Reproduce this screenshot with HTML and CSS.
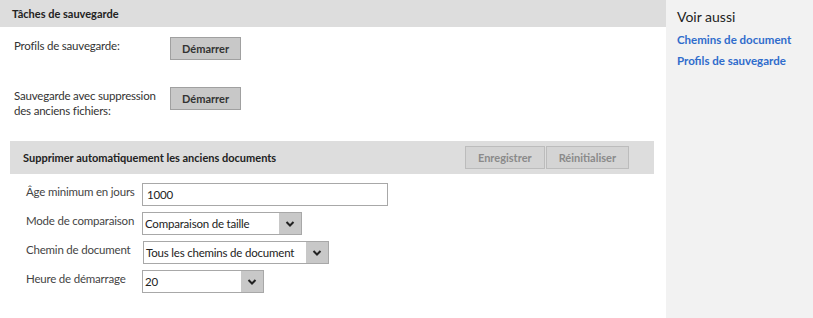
FILE: index.html
```html
<!DOCTYPE html>
<html lang="fr">
<head>
    <meta charset="UTF-8">
    <title>Tâches de sauvegarde</title>
    <link rel="stylesheet" href="styles.css">
</head>
<body>
    <main class="content">
        <div class="page-title">Tâches de sauvegarde</div>
        <div class="tasks">
            <div class="task">
                <span class="task-label">Profils de sauvegarde:</span>
                <button class="btn">Démarrer</button>
            </div>
            <div class="task">
                <span class="task-label">Sauvegarde avec suppression des anciens fichiers:</span>
                <button class="btn">Démarrer</button>
            </div>
        </div>

        <section class="panel">
            <div class="panel-head">
                <strong>Supprimer automatiquement les anciens documents</strong>
                <div class="panel-actions">
                    <button class="btn btn-disabled">Enregistrer</button>
                    <button class="btn btn-disabled">Réinitialiser</button>
                </div>
            </div>
            <div class="form">
                <div class="form-row">
                    <label>Âge minimum en jours</label>
                    <div class="field field-text">1000</div>
                </div>
                <div class="form-row">
                    <label>Mode de comparaison</label>
                    <div class="field field-select sel-mode"><span>Comparaison de taille</span><i class="arrow"><svg width="10" height="6" viewBox="0 0 10 6"><polyline points="1.5,1 5,4.5 8.5,1" fill="none" stroke="#222" stroke-width="2"/></svg></i></div>
                </div>
                <div class="form-row">
                    <label>Chemin de document</label>
                    <div class="field field-select sel-path"><span>Tous les chemins de document</span><i class="arrow"><svg width="10" height="6" viewBox="0 0 10 6"><polyline points="1.5,1 5,4.5 8.5,1" fill="none" stroke="#222" stroke-width="2"/></svg></i></div>
                </div>
                <div class="form-row">
                    <label>Heure de démarrage</label>
                    <div class="field field-select sel-hour"><span>20</span><i class="arrow"><svg width="10" height="6" viewBox="0 0 10 6"><polyline points="1.5,1 5,4.5 8.5,1" fill="none" stroke="#222" stroke-width="2"/></svg></i></div>
                </div>
            </div>
        </section>
    </main>
    <aside class="sidebar">
        <div class="side-title">Voir aussi</div>
        <a href="#">Chemins de document</a>
        <a href="#">Profils de sauvegarde</a>
    </aside>
</body>
</html>
```

FILE: styles.css
```css
body {
    margin: 0;
    display: flex;
    min-height: 318px;
    font-family: Lato, "Open Sans", sans-serif;
    font-size: 11.5px;
    color: #333;
    background: #fff;
}
.content {
    width: 666px;
}
.page-title {
    height: 27px;
    line-height: 27px;
    padding-left: 12px;
    background-color: #dddddd;
    font-size: 11px;
    font-weight: bold;
    color: #222;
}
.tasks {
    padding: 10px 14px 0;
}
.task {
    display: flex;
    align-items: flex-start;
    margin-bottom: 27px;
}
.task:last-child {
    margin-bottom: 0;
}
.task-label {
    width: 156px;
    line-height: 15px;
    padding-top: 1px;
    letter-spacing: -0.2px;
}
.btn {
    height: 23px;
    padding: 0 11px;
    font-family: inherit;
    font-size: 11px;
    font-weight: bold;
    color: #333;
    background-color: #c8c8c8;
    border: 1px solid #a0a0a0;
}
.panel {
    margin: 23px 12px 0 10px;
}
.panel-head {
    display: flex;
    align-items: center;
    justify-content: space-between;
    height: 33px;
    padding: 0 25px 0 13px;
    background-color: #dddddd;
    font-size: 11px;
    color: #222;
}
.panel-actions {
    display: flex;
    gap: 1px;
}
.btn-disabled {
    padding: 0 12px;
    background-color: #d4d4d4;
    border-color: #bcbcbc;
    color: #8a8a8a;
}
.form {
    padding: 9px 0 0 16px;
}
.form-row {
    display: flex;
    align-items: flex-start;
    margin-bottom: 6px;
}
.form-row label {
    width: 116px;
    padding-top: 2px;
    white-space: nowrap;
    letter-spacing: -0.2px;
    color: #444;
}
.field {
    box-sizing: border-box;
    height: 23px;
    border: 1px solid #a8a8a8;
    display: flex;
    align-items: center;
    font-size: 11.5px;
    letter-spacing: -0.2px;
    color: #222;
    white-space: nowrap;
}
.field-text {
    width: 246px;
    padding-left: 4px;
}
.field-select span {
    flex: 1;
    padding-left: 2px;
}
.arrow {
    width: 22px;
    height: 100%;
    background-color: #c8c8c8;
    display: flex;
    align-items: center;
    justify-content: center;
}
.sel-mode { width: 160px; }
.sel-path { width: 186px; margin-left: 1px; }
.sel-hour { width: 122px; }
.sidebar {
    flex: 1;
    background-color: #f2f2f2;
    padding: 8px 11px;
    display: flex;
    flex-direction: column;
}
.side-title {
    font-size: 14px;
    color: #222;
    margin-bottom: 4px;
}
.sidebar a {
    color: #2f6ccc;
    font-size: 11.5px;
    font-weight: bold;
    text-decoration: none;
    line-height: 21px;
}
```
